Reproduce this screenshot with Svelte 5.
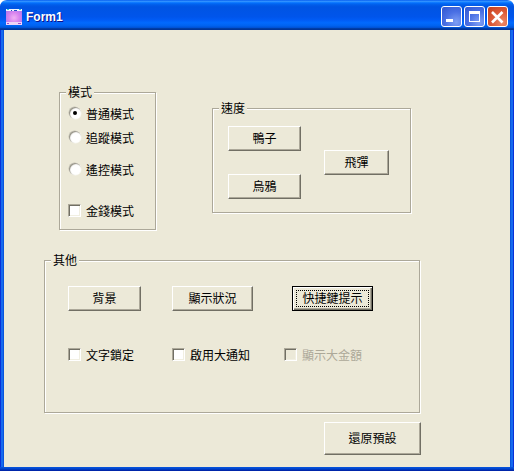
<script lang="ts">
	const modes = [
		{ label: '普通模式', checked: true, cls: 'r1' },
		{ label: '追蹤模式', checked: false, cls: 'r2' },
		{ label: '遙控模式', checked: false, cls: 'r3' }
	];
	const toggles = [
		{ label: '文字鎖定', disabled: false },
		{ label: '啟用大通知', disabled: false },
		{ label: '顯示大金額', disabled: true }
	];
</script>

<div class="window">
	<div class="titlebar">
		<svg class="app-icon" width="16" height="16" viewBox="0 0 16 16">
			<defs>
				<radialGradient id="iconfill" cx="50%" cy="55%" r="60%">
					<stop offset="0%" stop-color="#f0b0f4" />
					<stop offset="55%" stop-color="#d884ee" />
					<stop offset="100%" stop-color="#b478ee" />
				</radialGradient>
			</defs>
			<rect width="16" height="16" fill="url(#iconfill)" />
			<rect y="0" width="16" height="2" fill="#f2f4ff" />
			<rect y="13" width="16" height="3" fill="#f0d4f6" />
			<rect x="1" y="0" width="2" height="1" fill="#30c0d8" />
			<rect x="5" y="1" width="1" height="1" fill="#2050c0" />
			<rect x="8" y="1" width="3" height="1" fill="#2050c0" />
			<rect x="13" y="0" width="2" height="1" fill="#30c0d8" />
			<rect x="1" y="14" width="2" height="1" fill="#a050d0" />
			<rect x="12" y="14" width="3" height="1" fill="#a050d0" />
		</svg>
		<span class="title">Form1</span>
		<div class="controls">
			<div class="ctl">
				<svg width="21" height="21" viewBox="0 0 21 21"><rect x="5" y="13" width="7" height="3" fill="#fff" /></svg>
			</div>
			<div class="ctl">
				<svg width="21" height="21" viewBox="0 0 21 21"><rect x="5.500" y="5.500" width="10" height="10" fill="none" stroke="#fff" /><rect x="5" y="5" width="11" height="3" fill="#fff" /></svg>
			</div>
			<div class="ctl close">
				<svg width="21" height="21" viewBox="0 0 21 21"><path d="M5 6l10.500 10.500M15.500 6l-10.500 10.500" stroke="#fff" stroke-width="2.600" /></svg>
			</div>
		</div>
	</div>
	<div class="client">
		<div class="top-row">
			<div class="group mode">
				<span class="legend">模式</span>
				{#each modes as m}
					<div class="option {m.cls}">
						<span class="radio" class:on={m.checked}></span>
						<span>{m.label}</span>
					</div>
				{/each}
				<div class="option money">
					<span class="check"></span>
					<span>金錢模式</span>
				</div>
			</div>
			<div class="group speed">
				<span class="legend">速度</span>
				<button class="btn duck">鴨子</button>
				<button class="btn missile">飛彈</button>
				<button class="btn crow">烏鴉</button>
			</div>
		</div>
		<div class="group other">
			<span class="legend">其他</span>
			<div class="btn-row">
				<button class="btn bg">背景</button>
				<button class="btn status">顯示狀況</button>
				<button class="btn hotkey"><span class="focus">快捷鍵提示</span></button>
			</div>
			<div class="check-row">
				{#each toggles as t}
					<div class="option" class:disabled={t.disabled}>
						<span class="check" class:off={t.disabled}></span>
						<span>{t.label}</span>
					</div>
				{/each}
			</div>
		</div>
		<div class="footer">
			<button class="btn reset">還原預設</button>
		</div>
	</div>
</div>

<style>
	:global(body) {
		margin: 0;
		background: #fff;
	}

	.window {
		width: 514px;
		height: 471px;
		box-sizing: border-box;
		display: flex;
		flex-direction: column;
		font-family: "Noto Sans CJK TC", "Liberation Sans", sans-serif;
		font-size: 12px;
		color: #000;
		background:
			linear-gradient(180deg, #0855dd, #0048d0 40%, #001ea0) left 0 bottom 0 / 100% 4px no-repeat,
			linear-gradient(90deg, #0831d9 0, #0831d9 1px, #166aee 1px, #166aee 3px, #0855dd 3px) left top / 4px 100% no-repeat,
			linear-gradient(270deg, #0831d9 0, #0831d9 1px, #166aee 1px, #166aee 3px, #0855dd 3px) right top / 4px 100% no-repeat;
		border-radius: 7px 7px 0 0;
		overflow: hidden;
	}

	.titlebar {
		height: 30px;
		flex: none;
		display: flex;
		align-items: center;
		box-sizing: border-box;
		padding: 3px 6px 0 6px;
		background: linear-gradient(180deg, #0058ee 0%, #3593ff 4%, #288eff 6%, #127dff 8%, #036ffc 10%, #0262ee 14%, #0057e5 20%, #0054e3 24%, #0055eb 56%, #005bf5 66%, #026afe 76%, #0062ef 86%, #0052d6 92%, #0040ab 94%, #003092 100%);
	}

	.app-icon {
		flex: none;
	}

	.title {
		margin-left: 4px;
		font-family: "Liberation Sans", sans-serif;
		font-weight: bold;
		font-size: 12px;
		color: #fff;
		text-shadow: 1px 1px 0 #0f1089;
	}

	.controls {
		margin-left: auto;
		display: flex;
		gap: 2px;
	}

	.ctl {
		width: 21px;
		height: 21px;
		box-sizing: border-box;
		border: 1px solid #fff;
		border-radius: 3px;
		background: radial-gradient(circle at 75% 80%, #7f9ff4 0%, #4a70e4 50%, #2f55d0 100%);
		overflow: hidden;
	}

	.ctl svg {
		display: block;
		margin: -1px;
	}

	.ctl.close {
		background: radial-gradient(circle at 75% 80%, #ec8a68 0%, #dc5a38 50%, #c43e1a 100%);
	}

	.client {
		flex: 1;
		margin: 0 4px 4px;
		background: #ece9d8;
		display: flex;
		flex-direction: column;
	}

	.group {
		position: relative;
		box-sizing: border-box;
		border: 1px solid #aca899;
		box-shadow: 1px 1px 0 #fff, inset 1px 1px 0 #fff;
	}

	.legend {
		position: absolute;
		top: -9px;
		left: 6px;
		padding: 0 2px;
		line-height: 16px;
		background: #ece9d8;
	}

	.top-row {
		display: flex;
		align-items: flex-start;
		padding: 62px 0 0 55px;
	}

	.mode {
		width: 97px;
		height: 138px;
		padding-left: 9px;
	}

	.speed {
		width: 199px;
		height: 105px;
		margin: 16px 0 0 56px;
		display: grid;
		grid-template-columns: 73px 65px;
		grid-template-rows: 24px 24px 25px;
		column-gap: 23px;
		padding: 17px 0 0 15px;
	}

	.duck {
		grid-area: 1 / 1;
	}

	.missile {
		grid-area: 2 / 2;
	}

	.crow {
		grid-area: 3 / 1;
	}

	.option {
		display: flex;
		align-items: center;
		height: 16px;
		gap: 5px;
		white-space: nowrap;
	}

	.r1 {
		margin-top: 12px;
	}

	.r2 {
		margin-top: 8px;
	}

	.r3 {
		margin-top: 16px;
	}

	.money {
		margin: 25px 0 0 -1px;
	}

	.radio {
		width: 12px;
		height: 12px;
		flex: none;
		border-radius: 50%;
		background: #fff;
		box-shadow: inset 1px 1px 1px #8f8c7e, -0.5px -0.5px 0 #c4c1b2, 0.5px 0.5px 0 #f8f7f0;
		position: relative;
	}

	.radio.on::after {
		content: "";
		position: absolute;
		left: 4px;
		top: 4px;
		width: 4px;
		height: 4px;
		border-radius: 50%;
		background: #000;
	}

	.check {
		width: 13px;
		height: 13px;
		flex: none;
		box-sizing: border-box;
		background: #fff;
		border: 1px solid;
		border-color: #aca899 #fff #fff #aca899;
		box-shadow: inset 1px 1px 0 #716f64, inset -1px -1px 0 #f1efe2;
	}

	.check.off {
		background: #ece9d8;
	}

	.disabled {
		color: #aca899;
	}

	.other {
		width: 376px;
		height: 153px;
		margin: 30px 0 0 40px;
		padding: 25px 0 0 23px;
	}

	.btn-row {
		display: flex;
		gap: 31px;
	}

	.btn {
		box-sizing: border-box;
		width: 73px;
		height: 25px;
		padding: 0 0 2px;
		font: inherit;
		color: #000;
		background: #ece9d8;
		border: 1px solid;
		border-color: #fff #716f64 #716f64 #fff;
		box-shadow: inset -1px -1px 0 #aca899;
		border-radius: 0;
	}

	.speed .missile {
		width: 65px;
	}

	.status {
		width: 81px;
	}

	.hotkey {
		width: 81px;
		margin-left: 8px;
		padding: 0;
		border: 1px solid #000;
		box-shadow: inset 1px 1px 0 #fff, inset -1px -1px 0 #716f64, inset -2px -2px 0 #aca899;
	}

	.focus {
		display: block;
		box-sizing: border-box;
		height: 17px;
		margin: 3px;
		border: 1px dotted #000;
		line-height: 14px;
	}

	.check-row {
		display: flex;
		margin-top: 35px;
	}

	.check-row .option:nth-child(1) {
		width: 104px;
	}

	.check-row .option:nth-child(2) {
		width: 112px;
	}

	.footer {
		display: flex;
		padding: 9px 0 0 320px;
	}

	.reset {
		width: 97px;
		height: 33px;
	}
</style>
